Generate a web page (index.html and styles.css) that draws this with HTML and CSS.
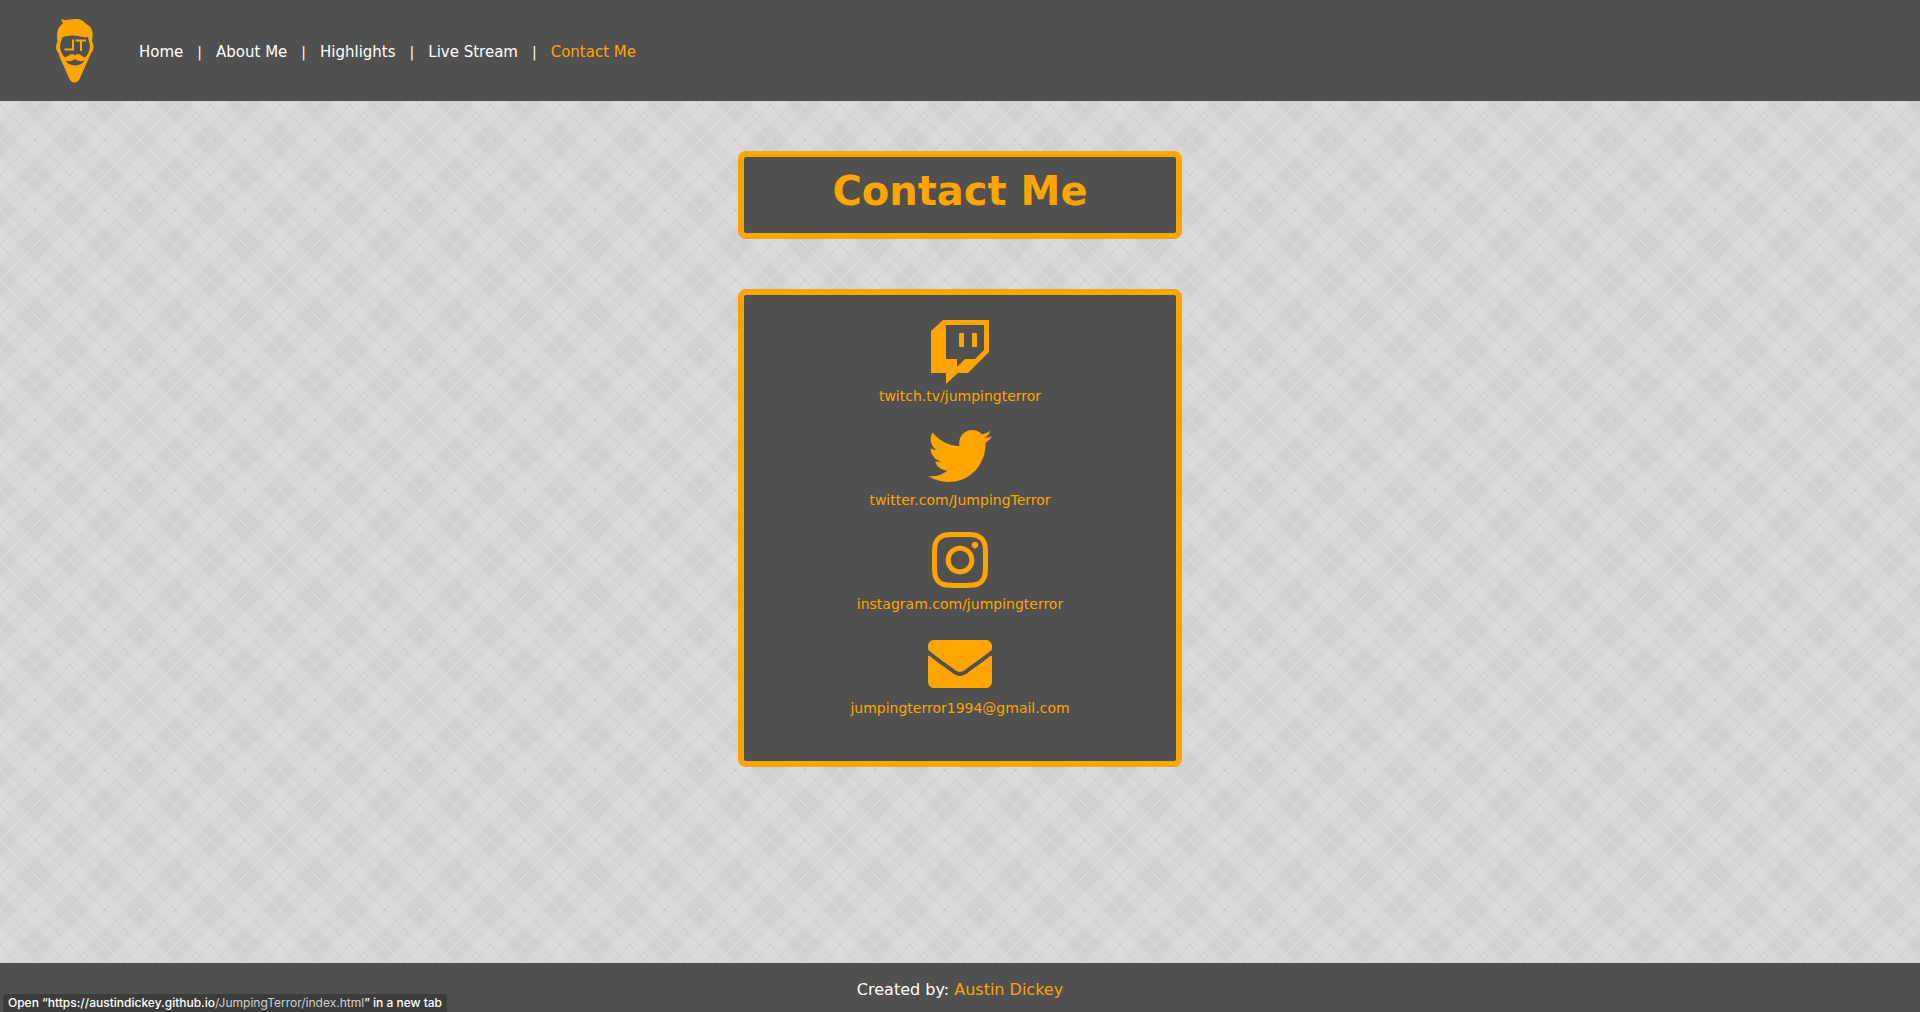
FILE: index.html
```html
<!DOCTYPE html>
<html lang="en">
<head>
<meta charset="utf-8">
<meta name="viewport" content="width=device-width, initial-scale=1">
<title>Jumping Terror - Contact Me</title>
<link rel="stylesheet" href="styles.css">
</head>
<body>
<header class="site-header">
  <a class="logo" href="#" aria-label="Jumping Terror">
    <svg viewBox="0 0 38 64" width="38" height="64" aria-hidden="true">
      <path fill="#ffa500" fill-rule="evenodd" d="M5 0C10 2 14 0 19 0C25 0 28 2 30 5C35 7 37 11 36.500 17L36 23C38.500 25 38 32 35 34L33 39L24 59C22 65 15 65 13 59L4 39L2.500 34C-.5 31 -.5 26 1.500 23L1 17C1 11 3 7 7 4.500ZM6 19C5.500 22 4 24 4 28C4.500 32 6 36 9 38.500C12 37.500 13.500 35 16 35C17.500 35 18.500 36 19 36.500C19.500 36 20.500 35 22 35C24.500 35 26 37.500 29 38.500C32 36 33.500 32 34 28C34 24 32.500 22 32 18C28 19.500 22 16 16 16.500C12 17 8 17 6 19ZM9.500 41.500C13 48 25 48 28.500 41.500C25 43 21.500 42 19 40C16.500 42 13 43 9.500 41.500Z"/>
      <path fill="none" stroke="#ffa500" stroke-width="2" d="M17 20.500V30.500H8.500M19.500 21.500H30M25 21.500V32"/>
    </svg>
  </a>
  <nav aria-label="Main">
    <ul class="menu">
      <li><a href="#">Home</a></li>
      <li><a href="#">About Me</a></li>
      <li><a href="#">Highlights</a></li>
      <li><a href="#">Live Stream</a></li>
      <li><a class="current" href="#" aria-current="page">Contact Me</a></li>
    </ul>
  </nav>
</header>

<main class="content">
  <h1 class="panel title">Contact Me</h1>
  <section class="panel contacts">
    <a class="contact" href="#">
      <svg viewBox="0 0 58 64" width="58" height="64" aria-hidden="true"><path fill-rule="evenodd" d="M12 0H58V32L37 53H27L15 64V53H0V11ZM15 5V39H26V47L34 39H44L53 30V5ZM28 13H33V27H28ZM41 13H46V27H41Z"/></svg>
      <span>twitch.tv/jumpingterror</span>
    </a>
    <a class="contact" href="#">
      <svg viewBox="0 0 512 512" width="64" height="64" aria-hidden="true"><path d="M459.37 151.716c.325 4.548.325 9.097.325 13.645 0 138.72-105.583 298.558-298.558 298.558-59.452 0-114.68-17.219-161.137-47.106 8.447.974 16.568 1.299 25.34 1.299 49.055 0 94.213-16.568 130.274-44.832-46.132-.975-84.792-31.188-98.112-72.772 6.498.974 12.995 1.624 19.818 1.624 9.421 0 18.843-1.3 27.614-3.573-48.081-9.747-84.143-51.98-84.143-102.985v-1.299c13.969 7.797 30.214 12.67 47.431 13.319-28.264-18.843-46.781-51.005-46.781-87.391 0-19.492 5.197-37.36 14.294-52.954 51.655 63.675 129.3 105.258 216.365 109.807-1.624-7.797-2.599-15.918-2.599-24.04 0-57.828 46.782-104.934 104.934-104.934 30.213 0 57.502 12.67 76.67 33.137 23.715-4.548 46.456-13.32 66.599-25.34-7.798 24.366-24.366 44.833-46.132 57.827 21.117-2.273 41.584-8.122 60.426-16.243-14.292 20.791-32.161 39.308-52.628 54.253z"/></svg>
      <span>twitter.com/JumpingTerror</span>
    </a>
    <a class="contact" href="#">
      <svg viewBox="0 0 448 512" width="56" height="64" aria-hidden="true"><path d="M224.1 141c-63.6 0-114.9 51.3-114.9 114.9s51.3 114.9 114.9 114.9S339 319.5 339 255.9 287.7 141 224.1 141zm0 189.6c-41.1 0-74.7-33.5-74.7-74.7s33.5-74.7 74.7-74.7 74.7 33.5 74.7 74.7-33.6 74.7-74.7 74.7zm146.4-194.3c0 14.9-12 26.8-26.8 26.8-14.9 0-26.8-12-26.8-26.8s12-26.8 26.8-26.8 26.8 12 26.8 26.8zm76.1 27.2c-1.7-35.9-9.9-67.7-36.2-93.9-26.2-26.2-58-34.4-93.9-36.2-37-2.1-147.9-2.1-184.9 0-35.8 1.7-67.6 9.9-93.9 36.1s-34.4 58-36.2 93.9c-2.1 37-2.1 147.9 0 184.9 1.7 35.9 9.9 67.7 36.2 93.9s58 34.4 93.9 36.2c37 2.1 147.9 2.1 184.9 0 35.9-1.7 67.7-9.9 93.9-36.2 26.2-26.2 34.4-58 36.2-93.9 2.1-37 2.1-147.8 0-184.8zM398.8 388c-7.8 19.6-22.9 34.7-42.6 42.6-29.5 11.7-99.5 9-132.1 9s-102.7 2.6-132.1-9c-19.6-7.8-34.7-22.9-42.6-42.6-11.7-29.5-9-99.5-9-132.1s-2.6-102.7 9-132.1c7.8-19.6 22.9-34.7 42.6-42.6 29.5-11.7 99.5-9 132.1-9s102.7-2.6 132.1 9c19.6 7.8 34.7 22.9 42.6 42.6 11.7 29.5 9 99.5 9 132.1s2.7 102.7-9 132.1z"/></svg>
      <span>instagram.com/jumpingterror</span>
    </a>
    <a class="contact" href="#">
      <svg viewBox="0 0 512 512" width="64" height="64" aria-hidden="true"><path d="M502.3 190.8c3.9-3.1 9.7-.2 9.7 4.7V400c0 26.5-21.5 48-48 48H48c-26.5 0-48-21.5-48-48V195.6c0-5 5.7-7.8 9.7-4.7 22.4 17.4 52.1 39.5 154.1 113.6 21.1 15.4 56.7 47.8 92.2 47.6 35.7.3 72-32.8 92.3-47.6 102-74.1 131.6-96.3 154-113.7zM256 320c23.2.4 56.6-29.2 73.4-41.4 132.7-96.3 142.8-104.7 173.4-128.7 5.8-4.5 9.2-11.5 9.2-18.9v-19c0-26.5-21.5-48-48-48H48c-26.5 0-48 21.5-48 48v19c0 7.4 3.4 14.3 9.2 18.9 30.6 23.9 40.7 32.4 173.4 128.7 16.8 12.2 50.2 41.8 73.4 41.4z"/></svg>
      <span>jumpingterror1994@gmail.com</span>
    </a>
  </section>
</main>

<footer class="site-footer">
  <p>Created by: <a href="#">Austin Dickey</a></p>
</footer>
<div class="link-status" role="status">Open “https://austindickey.github.io<span class="path">/JumpingTerror/index.html</span>” in a new tab</div>
</body>
</html>
```
FILE: styles.css
```css
* {
  box-sizing: border-box;
}

body {
  display: flex;
  flex-direction: column;
  min-height: 100vh;
  margin: 0;
  color: #fff;
  font-family: "DejaVu Sans", sans-serif;
  font-size: 14px;
  line-height: 24px;
  /* tartan: soft diagonal bands with a thin line down the middle of each */
  background-color: #d1d1d1;
  background-image:
    url("data:image/svg+xml,%3Csvg xmlns='http://www.w3.org/2000/svg' width='70' height='70'%3E%3Cg fill='none' stroke='%23fff' stroke-opacity='.1' stroke-width='25'%3E%3Cpath d='M-70 -70L140 140M-70 0L70 140M0 -70L140 70'/%3E%3Cpath d='M-70 140L140 -70M-70 70L70 -70M0 140L140 0'/%3E%3C/g%3E%3Cg fill='none' stroke='%23999' stroke-opacity='.4' stroke-dasharray='1 1'%3E%3Cpath d='M0 0L70 70M0 70L70 0'/%3E%3C/g%3E%3Cg fill='none' stroke='%23fff' stroke-opacity='.25'%3E%3Cpath d='M-5 30L40 75M30 -5L75 40M-5 40L40 -5M30 75L75 30'/%3E%3C/g%3E%3C/svg%3E");
  background-position: 35px 0;
}

a {
  color: #ffa500;
  text-decoration: none;
}

.site-header {
  display: flex;
  align-items: center;
  gap: 45px;
  min-height: 101px;
  padding: 0 56px;
  background: #505050;
}

.logo svg {
  display: block;
}

.menu {
  display: flex;
  flex-wrap: wrap;
  margin: 0;
  padding: 2px 0 0;
  list-style: none;
  font-size: 15px;
}

.menu li + li::before {
  content: "|";
  margin: 0 14px;
  font-size: 14px;
}

.menu a {
  color: #fff;
}

.menu .current {
  color: #ffa500;
}

.content {
  display: flex;
  flex: 1;
  flex-direction: column;
  align-items: center;
  gap: 50px;
  padding: 50px 16px;
}

.panel {
  width: 100%;
  max-width: 444px;
  margin: 0;
  border: 6px solid #ffa500;
  border-radius: 8px;
  background: #505050;
}

.title {
  padding: 10px 8px 18px;
  color: #ffa500;
  font-size: 40px;
  line-height: 48px;
  text-align: center;
}

.contacts {
  display: flex;
  flex-direction: column;
  align-items: center;
  gap: 16px;
  padding: 25px 8px 41px;
}

.contact {
  display: flex;
  flex-direction: column;
  align-items: center;
}

.contact svg {
  fill: #ffa500;
}

.site-footer {
  padding: 15px 16px 10px;
  background: #505050;
  font-size: 16px;
  text-align: center;
}

.site-footer p {
  margin: 0;
}

.link-status {
  position: fixed;
  bottom: 0;
  left: 3px;
  padding: 0 5px;
  border-radius: 3px 3px 0 0;
  background: #3c3c3c;
  font-family: Inter, sans-serif;
  font-size: 12px;
  font-weight: 500;
  line-height: 18px;
}

.link-status .path {
  color: #d0d0d0;
  font-weight: 400;
}
```
